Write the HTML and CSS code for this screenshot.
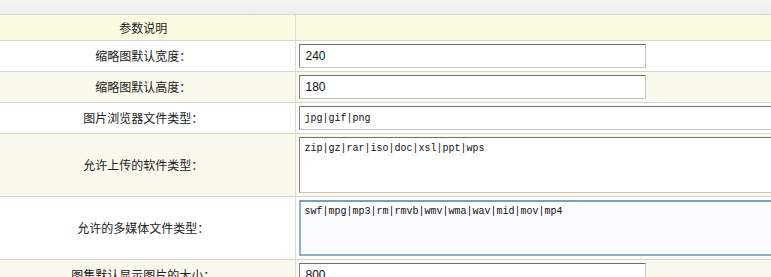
FILE: index.html
```html
<!DOCTYPE html>
<html lang="zh-CN">

<head>
    <meta charset="UTF-8">
    <title>参数设置</title>
    <link rel="stylesheet" href="styles.css">
</head>

<body>
    <div class="topbar"></div>
    <table class="config">
        <tr class="head">
            <td class="label">参数说明</td>
            <td class="value"></td>
        </tr>
        <tr>
            <td class="label">缩略图默认宽度：</td>
            <td class="value"><input class="txt" type="text" value="240"></td>
        </tr>
        <tr class="alt">
            <td class="label">缩略图默认高度：</td>
            <td class="value"><input class="txt" type="text" value="180"></td>
        </tr>
        <tr>
            <td class="label">图片浏览器文件类型：</td>
            <td class="value"><input class="txt wide mono" type="text" value="jpg|gif|png"></td>
        </tr>
        <tr class="alt tall">
            <td class="label">允许上传的软件类型：</td>
            <td class="value"><textarea class="area">zip|gz|rar|iso|doc|xsl|ppt|wps</textarea></td>
        </tr>
        <tr class="tall">
            <td class="label">允许的多媒体文件类型：</td>
            <td class="value"><textarea class="area focus">swf|mpg|mp3|rm|rmvb|wmv|wma|wav|mid|mov|mp4</textarea></td>
        </tr>
        <tr class="alt">
            <td class="label">图集默认显示图片的大小：</td>
            <td class="value"><input class="txt" type="text" value="800"></td>
        </tr>
    </table>
</body>

</html>
```

FILE: styles.css
```css
body {
    margin: 0;
    background: #ffffff;
    font-family: "Noto Sans CJK SC", "DejaVu Sans", sans-serif;
    font-size: 12px;
    color: #222;
    overflow: hidden;
}

.topbar {
    height: 14px;
    background: linear-gradient(to bottom, #f6f6f6, #eeeeee);
}

.config {
    width: 100%;
    border-collapse: collapse;
    table-layout: fixed;
}

.config td {
    border-top: 1px solid #d6d6cc;
    padding: 0;
    white-space: nowrap;
    overflow: visible;
}

.config tr {
    height: 31px;
}

.config tr.head {
    height: 26px;
    background: #fbfbe2;
}

.config tr.alt {
    background: #f9f9ee;
}

.config tr.tall {
    height: 63px;
}

.label {
    width: 295px;
    text-align: center;
    padding-right: 8px !important;
    box-sizing: border-box;
    border-right: 1px solid #dcdcd2;
    line-height: 16px;
}

.value {
    padding-left: 3px !important;
}

.txt {
    display: block;
    box-sizing: border-box;
    width: 347px;
    height: 24px;
    margin: 0;
    padding: 0 6px;
    border: 1px solid #c4c4c4;
    border-top-color: #707070;
    border-left-color: #808080;
    background: #fff;
    font-family: "Liberation Sans", sans-serif;
    font-size: 12px;
    color: #111;
}

.txt.wide {
    width: 520px;
}

.mono {
    font-family: "Liberation Mono", monospace;
    font-size: 10px;
    padding-left: 5px;
}

.area {
    display: block;
    box-sizing: border-box;
    width: 520px;
    height: 56px;
    margin: 0;
    padding: 4px 5px;
    resize: none;
    border: 1px solid #c4c4c4;
    border-top-color: #707070;
    border-left-color: #808080;
    background: #fff;
    font-family: "Liberation Mono", monospace;
    font-size: 10px;
    line-height: 14px;
    color: #111;
    overflow: hidden;
}

.area.focus {
    border: 2px solid #8fb0c4;
    border-top-color: #7a9fb8;
    background: #fbfcff;
    padding: 3px 4px;
}
```
